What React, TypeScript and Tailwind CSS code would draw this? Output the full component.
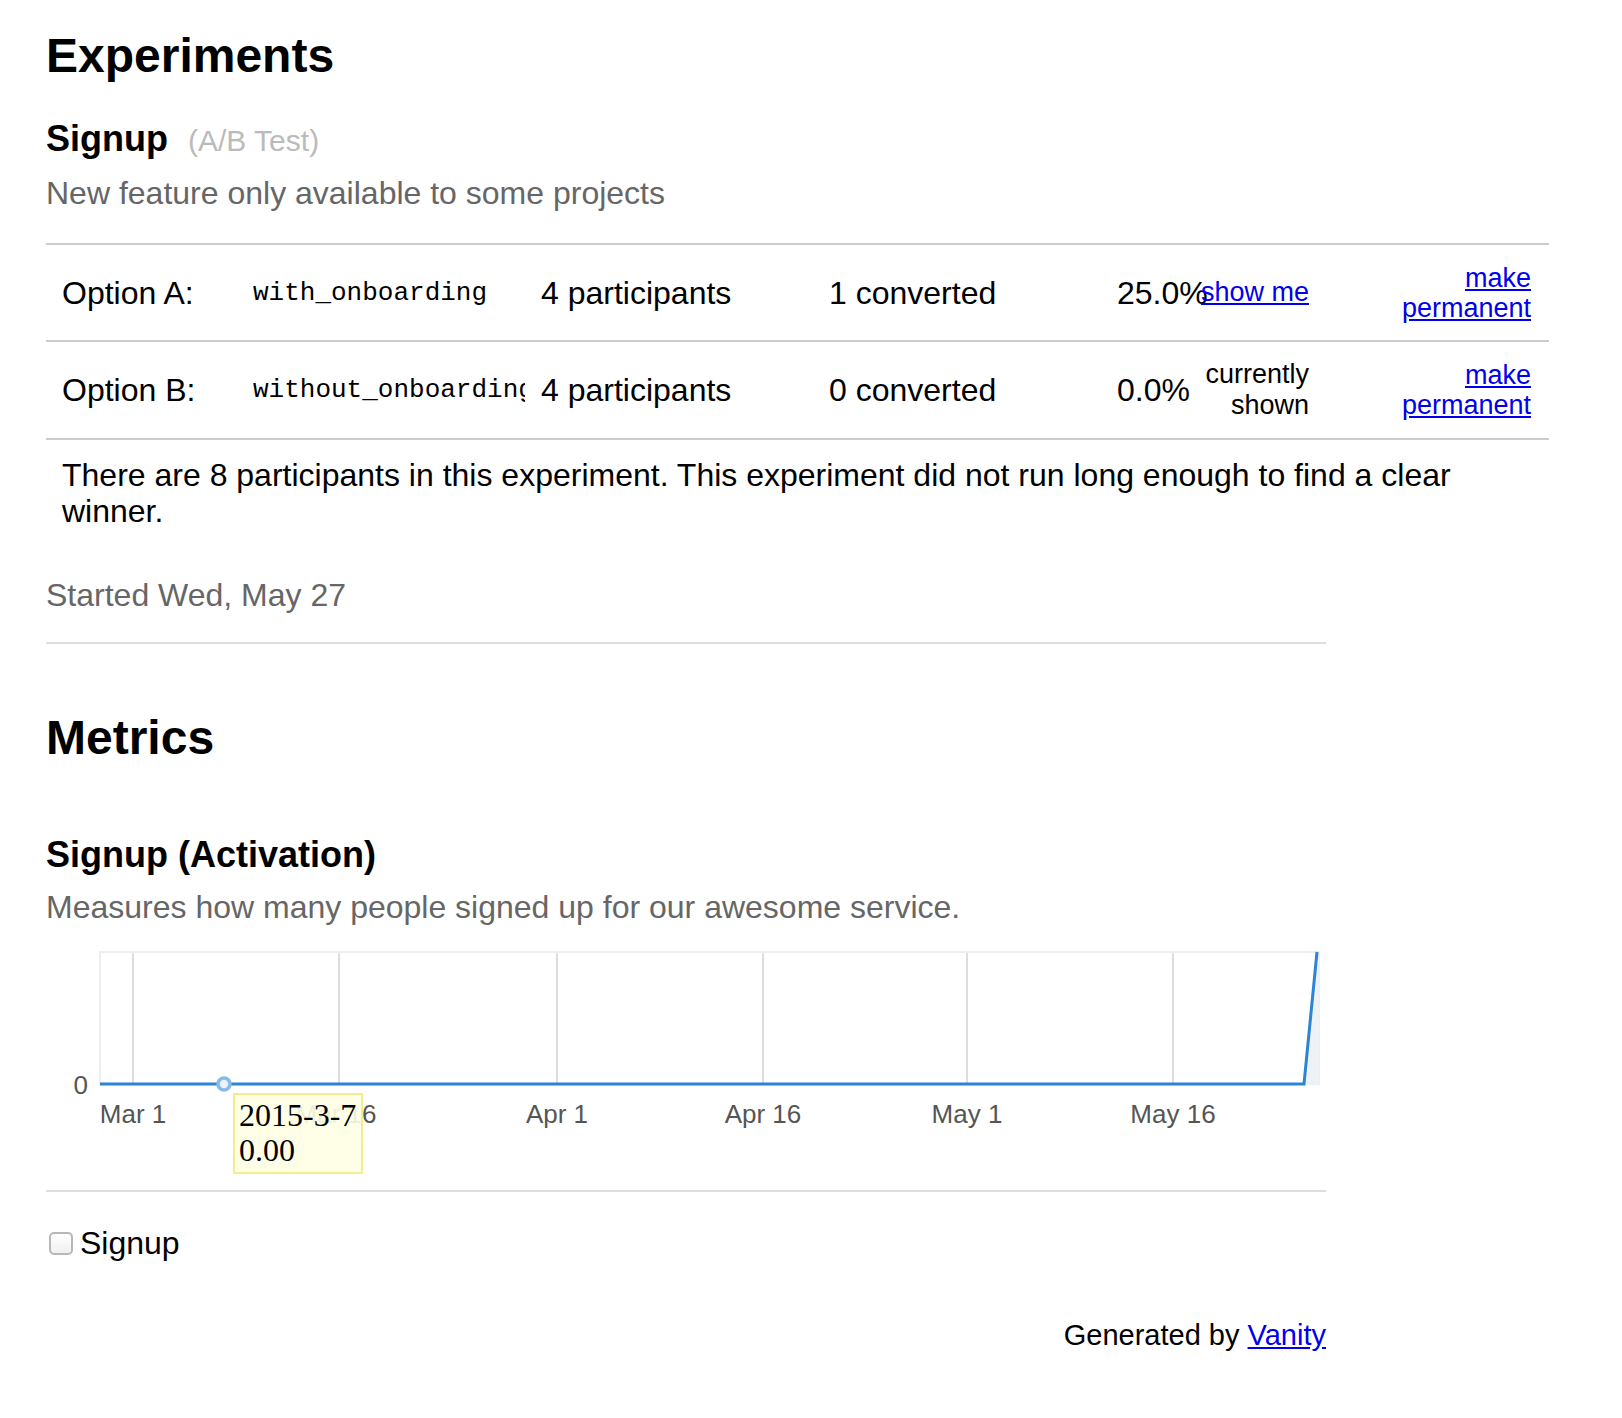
import React from "react";

type Option = {
  label: string;
  value: string;
  participants: number;
  converted: number;
  rate: string;
  shown: boolean;
};

const options: Option[] = [
  { label: "Option A:", value: "with_onboarding", participants: 4, converted: 1, rate: "25.0%", shown: false },
  { label: "Option B:", value: "without_onboarding", participants: 4, converted: 0, rate: "0.0%", shown: true },
];

// grid lines and labels of the metric chart (svg coords)
const ticks = [
  { x: 87, lx: 87, label: "Mar 1" },
  { x: 293, lx: 290, label: "Mar 16" },
  { x: 511, lx: 511, label: "Apr 1" },
  { x: 717, lx: 717, label: "Apr 16" },
  { x: 921, lx: 921, label: "May 1" },
  { x: 1127, lx: 1127, label: "May 16" },
];

function OptionRow({ option, height }: { option: Option; height: string }) {
  return (
    <div className={`flex items-center border-t-2 border-[#ccc] pl-[16px] pr-[18px] text-[32px] leading-[38px] ${height}`}>
      <div className="w-[191px] shrink-0">{option.label}</div>
      <div className="mr-[16px] w-[272px] shrink-0 overflow-hidden whitespace-nowrap font-['Liberation_Mono',monospace] text-[26px] leading-[30px]">
        {option.value}
      </div>
      <div className="w-[288px] shrink-0">{option.participants} participants</div>
      <div className="w-[288px] shrink-0">{option.converted} converted</div>
      <div className="w-[84px] shrink-0 whitespace-nowrap">{option.rate}</div>
      <div className="flex w-[108px] shrink-0 justify-end text-right text-[27px] leading-[31px]">
        {option.shown ? (
          <span>currently shown</span>
        ) : (
          <a href="#" className="whitespace-nowrap text-[#0000ee] underline">
            show me
          </a>
        )}
      </div>
      <div className="flex flex-1 justify-end">
        <a href="#" className="w-[130px] text-right text-[27px] leading-[30px] text-[#0000ee] underline">
          make permanent
        </a>
      </div>
    </div>
  );
}

function MetricChart() {
  return (
    <div className="relative h-[262px] w-[1280px]">
      <svg width="1280" height="262" className="block font-['Liberation_Sans',Arial,sans-serif]">
        <rect x="54" y="26" width="1219" height="132" fill="white" stroke="#eee" strokeWidth="2" />
        {ticks.map((t) => (
          <line key={t.x} x1={t.x} y1="27" x2={t.x} y2="158" stroke="#ddd" strokeWidth="2" />
        ))}
        <polygon points="1258,158 1271,26 1273,26 1273,158" fill="#eef2f6" />
        <polyline points="54,158 1258,158 1271,26" fill="none" stroke="#2c84d4" strokeWidth="3" />
        <circle cx="178" cy="158" r="6" fill="#eaf3fb" stroke="#86bbe8" strokeWidth="3.5" />
        <text x="42" y="168" textAnchor="end" fontSize="26" fill="#555">
          0
        </text>
        {ticks.map((t) => (
          <text key={t.label} x={t.lx} y="197" textAnchor="middle" fontSize="26" fill="#555">
            {t.label}
          </text>
        ))}
      </svg>
      {/* hover tooltip */}
      <div className="absolute left-[187px] top-[167px] w-[130px] border-2 border-[#f3ee8c] bg-[#ffffe6]/90 pl-[4px] pt-[3px] pb-[4px] font-['Liberation_Serif','Times_New_Roman',serif] text-[32px] leading-[35px] text-black">
        <div>2015-3-7</div>
        <div>0.00</div>
      </div>
    </div>
  );
}

export default function App() {
  return (
    <div className="min-h-screen bg-white pl-[46px] pt-[28px] font-['Liberation_Sans',Arial,sans-serif] text-black">
      <div className="w-[1280px]">
        <h1 className="text-[48px] font-bold leading-[56px]">Experiments</h1>

        {/* Experiment */}
        <h2 className="mt-[34px] text-[36px] font-bold leading-[42px]">
          Signup <span className="ml-[10px] text-[30px] font-normal text-[#bbb]">(A/B Test)</span>
        </h2>
        <p className="mt-[12px] text-[32px] leading-[38px] text-[#666]">New feature only available to some projects</p>

        <div className="mt-[31px] w-[1503px]">
          <OptionRow option={options[0]} height="h-[97px]" />
          <OptionRow option={options[1]} height="h-[98px]" />
          <div className="border-t-2 border-[#ccc] pl-[16px] pr-[16px] pt-[17px] pb-[16px] text-[32px] leading-[36px]">
            There are 8 participants in this experiment. This experiment did not run long enough to find a clear winner.
          </div>
        </div>

        <p className="mt-[31px] text-[32px] leading-[38px] text-[#666]">Started Wed, May 27</p>
        <hr className="mt-[28px] border-t-2 border-[#ddd]" />

        {/* Metrics */}
        <h1 className="mt-[66px] text-[48px] font-bold leading-[56px]">Metrics</h1>
        <h2 className="mt-[68px] text-[36px] font-bold leading-[42px]">Signup (Activation)</h2>
        <p className="mt-[12px] text-[32px] leading-[38px] text-[#666]">
          Measures how many people signed up for our awesome service.
        </p>

        <MetricChart />
        <hr className="mt-[2px] border-t-2 border-[#ddd]" />

        <label className="mt-[32px] flex items-center text-[32px] leading-[38px]">
          <input
            type="checkbox"
            className="ml-[3px] mr-[7px] h-[23px] w-[24px] appearance-none rounded-[5px] border-2 border-[#b8b8b8] bg-gradient-to-b from-white to-[#f0f0f0]"
          />
          Signup
        </label>

        <div className="mt-[57px] pb-[40px] text-right text-[29px] leading-[32px]">
          Generated by{" "}
          <a href="#" className="text-[#0000ee] underline">
            Vanity
          </a>
        </div>
      </div>
    </div>
  );
}
